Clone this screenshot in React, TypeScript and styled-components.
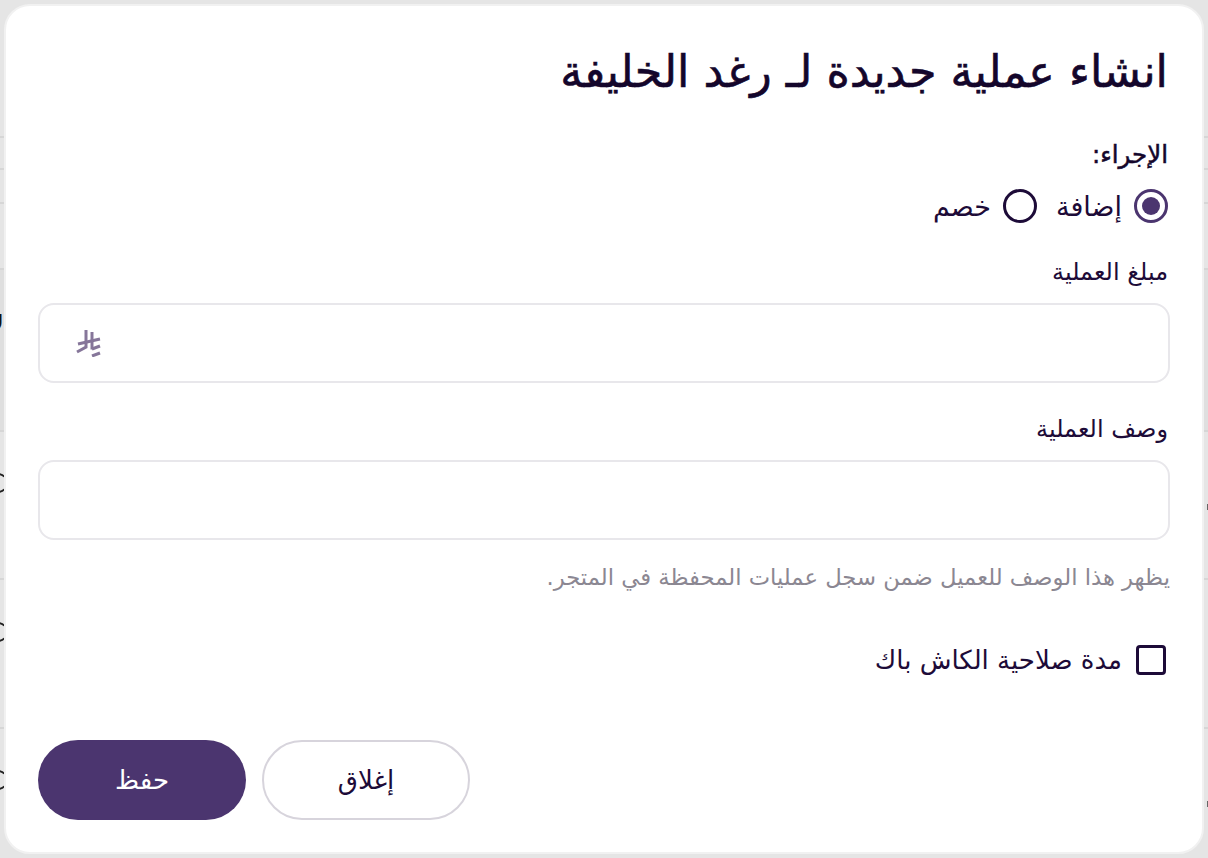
import React from 'react';
import styled, { createGlobalStyle } from 'styled-components';

const PURPLE = '#4b356f';
const INK = '#1d0b38';
const FONT = '"DejaVu Sans", "Noto Sans", sans-serif';

const GlobalStyle = createGlobalStyle`
    html, body{
        margin: 0;
        height: 100%;
        overflow: hidden;
        background: #e5e5e5;
    }
    *{
        box-sizing: border-box;
    }
`;

const Backdrop = styled.div`
    background: #e5e5e5;
    height: 858px;
    overflow: hidden;
    padding: 4px;
    position: relative;
    width: 1208px;
`;

const BehindLine = styled.div<{ $top: number }>`
    background: #d6d6d6;
    height: 2px;
    left: 0;
    position: absolute;
    right: 0;
    top: ${props => props.$top}px;
`;

const BehindBand = styled.div`
    background: #dfdfdf;
    height: 161px;
    left: 0;
    position: absolute;
    right: 0;
    top: 269px;
`;

// the icons of the table behind the dialog, only their edge shows
const BehindRing = styled.div<{ $top: number }>`
    border: 2px solid #222;
    border-left-color: transparent;
    border-radius: 50%;
    border-right-color: transparent;
    height: 20px;
    left: -12px;
    position: absolute;
    top: ${props => props.$top}px;
    width: 20px;
`;

const BehindGlyph = styled.div`
    color: #111;
    font-family: ${FONT};
    font-size: 24px;
    font-weight: 700;
    left: -14px;
    line-height: 30px;
    position: absolute;
    top: 309px;
`;

const BehindDot = styled.div<{ $top: number }>`
    background: #666;
    height: 6px;
    position: absolute;
    right: 0;
    top: ${props => props.$top}px;
    width: 1px;
`;

const Modal = styled.form`
    background: #fff;
    border: 2px solid #f1f1f1;
    border-radius: 26px;
    direction: rtl;
    display: flex;
    flex-direction: column;
    font-family: ${FONT};
    height: 850px;
    padding: 36px 32px 32px;
    position: relative;
    width: 1200px;
`;

const Title = styled.h2`
    color: #14062b;
    font-size: 44.5px;
    font-weight: 400;
    line-height: 60px;
    margin: 0 2px 35px 0;
    -webkit-text-stroke: 0.6px #14062b;
`;

const SectionLabel = styled.div`
    color: #14062b;
    font-size: 24.5px;
    font-weight: 400;
    line-height: 36px;
    margin: 0 2px 15px 0;
    -webkit-text-stroke: 0.5px #14062b;
`;

const RadioRow = styled.div`
    align-items: center;
    display: flex;
    gap: 19px;
    height: 36px;
    margin: 0 2px 31px 0;
`;

const RadioOption = styled.label`
    align-items: center;
    color: ${INK};
    display: flex;
    font-size: 27px;
    gap: 12px;
`;

const RadioMark = styled.span<{ $checked?: boolean }>`
    border: 3px solid ${props => props.$checked ? PURPLE : INK};
    border-radius: 50%;
    display: block;
    height: 34px;
    position: relative;
    width: 34px;

    &::before{
        background: ${PURPLE};
        border-radius: 50%;
        content: '';
        display: ${props => props.$checked ? 'block' : 'none'};
        height: 18px;
        left: 5px;
        position: absolute;
        top: 5px;
        width: 18px;
    }
`;

const FieldLabel = styled.div`
    color: ${INK};
    font-size: 24px;
    line-height: 34px;
    margin: 0 2px 14px 0;
`;

const InputBox = styled.div`
    align-items: center;
    border: 2px solid #e8e7eb;
    border-radius: 16px;
    display: flex;
    height: 80px;
    justify-content: flex-end;
    padding-left: 35px;
`;

const Hint = styled.div`
    color: #8b8792;
    font-size: 22.7px;
    line-height: 32px;
    margin-top: 21px;
`;

const FieldGroup = styled.div<{ $gap?: number }>`
    margin-bottom: ${props => props.$gap ?? 0}px;
`;

const CheckRow = styled.label`
    align-items: center;
    color: ${INK};
    display: flex;
    font-size: 26px;
    gap: 14px;
    height: 30px;
    margin-top: 52px;
    padding-right: 4px;
`;

const CheckBox = styled.span`
    border: 3px solid ${INK};
    border-radius: 4px;
    display: block;
    height: 30px;
    width: 30px;
`;

const Actions = styled.div`
    display: flex;
    gap: 16px;
    justify-content: flex-end;
    margin-top: auto;
`;

const ActionButton = styled.button<{ $primary?: boolean }>`
    background: ${props => props.$primary ? PURPLE : '#fff'};
    border: ${props => props.$primary ? 'none' : '2px solid #d7d4dc'};
    border-radius: 40px;
    color: ${props => props.$primary ? '#fff' : INK};
    font-family: ${FONT};
    font-size: 26px;
    height: 80px;
    width: 208px;
`;

const Riyal = () => (
    <svg width="28" height="28" viewBox="0 0 28 28" fill="none" stroke="#86769a" strokeWidth="3" aria-hidden="true">
        <path d="M11 1V18L2 23" />
        <path d="M17 3V20.500" />
        <path d="M3 15L25 10" />
        <path d="M17 20L25 17" />
        <path d="M17 27L25 24" />
    </svg>
);

export default function App(){
    return <Backdrop>
        <GlobalStyle />
        <BehindBand />
        {[136, 168, 202, 268, 430, 578, 727].map(top => <BehindLine key={top} $top={top} />)}
        <BehindGlyph>لا</BehindGlyph>
        {[473, 622, 770].map(top => <BehindRing key={top} $top={top} />)}
        {[504, 801].map(top => <BehindDot key={top} $top={top} />)}
        <Modal>
            <Title>انشاء عملية جديدة لـ رغد الخليفة</Title>
            <SectionLabel>الإجراء:</SectionLabel>
            <RadioRow>
                <RadioOption><RadioMark $checked />إضافة</RadioOption>
                <RadioOption><RadioMark />خصم</RadioOption>
            </RadioRow>
            <FieldGroup $gap={29}>
                <FieldLabel>مبلغ العملية</FieldLabel>
                <InputBox><Riyal /></InputBox>
            </FieldGroup>
            <FieldGroup>
                <FieldLabel>وصف العملية</FieldLabel>
                <InputBox />
                <Hint>يظهر هذا الوصف للعميل ضمن سجل عمليات المحفظة في المتجر.</Hint>
            </FieldGroup>
            <CheckRow><CheckBox />مدة صلاحية الكاش باك</CheckRow>
            <Actions>
                <ActionButton type="button">إغلاق</ActionButton>
                <ActionButton type="button" $primary>حفظ</ActionButton>
            </Actions>
        </Modal>
    </Backdrop>;
}
